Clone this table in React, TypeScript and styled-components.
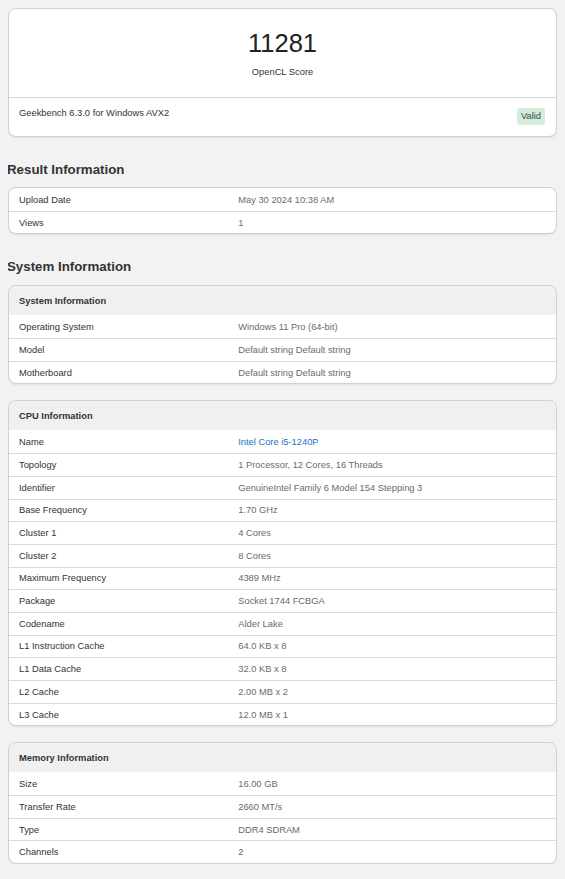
import React from "react";
import styled, { createGlobalStyle } from "styled-components";

const Global = createGlobalStyle`
  html, body { background: #f2f2f2; }
  body {
    margin: 8px;
    font-family: "Liberation Sans", Arial, sans-serif;
    color: #333;
  }
`;

const Card = styled.div`
  background: #fff;
  border: 1px solid #d0d0d0;
  border-radius: 8px;
  box-shadow: 0 1px 2px rgba(0, 0, 0, 0.08);
  overflow: hidden;
`;

const ScoreBody = styled.div`
  display: flex;
  flex-direction: column;
  align-items: center;
  padding: 19px 0 19px;
  border-bottom: 1px solid #d6d6d6;
`;

const Score = styled.div`
  font-size: 25.5px;
  line-height: 30px;
  color: #222;
`;

const ScoreLabel = styled.div`
  font-size: 9.33px;
  line-height: 12px;
  margin-top: 8px;
  color: #333;
`;

const ScoreFooter = styled.div`
  display: flex;
  justify-content: space-between;
  align-items: flex-start;
  padding: 9px 11px 11px 10px;
  font-size: 9.33px;
`;

const Version = styled.span`
  line-height: 12px;
  color: #333;
`;

const Badge = styled.span`
  background: #d4edda;
  color: #3b4a3e;
  border-radius: 3px;
  padding: 2px 4px;
  margin-top: 1px;
  line-height: 13px;
  font-size: 9.33px;
`;

const SectionTitle = styled.h2<{ $bottom: number }>`
  font-size: 13.3px;
  font-weight: bold;
  color: #333;
  margin: 25px 0 ${(p) => p.$bottom}px -1px;
  line-height: 16px;
`;

const Stack = styled.div`
  display: flex;
  flex-direction: column;
  gap: 16px;
`;

const HeaderRow = styled.div`
  background: #f0f0f0;
  height: 29px;
  display: flex;
  align-items: center;
  padding: 0 10px;
  font-size: 9.33px;
  font-weight: bold;
  color: #333;
`;

const Row = styled.div<{ $first?: boolean }>`
  display: grid;
  grid-template-columns: 41.6% 1fr;
  height: 22.7px;
  align-items: center;
  padding: 0 10px;
  font-size: 9.33px;
  border-top: 1px solid ${(p) => (p.$first ? "transparent" : "#dcdcdc")};
  box-sizing: border-box;
`;

const Label = styled.span`
  color: #333;
`;

const Value = styled.span`
  color: #6b6b6b;
`;

const LinkValue = styled.a`
  color: #1a73c1;
  text-decoration: none;
`;

type Item = [string, string, boolean?];

const InfoTable = ({ title, items }: { title?: string; items: Item[] }) => (
  <Card>
    {title && <HeaderRow>{title}</HeaderRow>}
    {items.map(([k, v, link], i) => (
      <Row key={k} $first={i === 0}>
        <Label>{k}</Label>
        {link ? <LinkValue href="#">{v}</LinkValue> : <Value>{v}</Value>}
      </Row>
    ))}
  </Card>
);

const result: Item[] = [
  ["Upload Date", "May 30 2024 10:38 AM"],
  ["Views", "1"],
];

const system: Item[] = [
  ["Operating System", "Windows 11 Pro (64-bit)"],
  ["Model", "Default string Default string"],
  ["Motherboard", "Default string Default string"],
];

const cpu: Item[] = [
  ["Name", "Intel Core i5-1240P", true],
  ["Topology", "1 Processor, 12 Cores, 16 Threads"],
  ["Identifier", "GenuineIntel Family 6 Model 154 Stepping 3"],
  ["Base Frequency", "1.70 GHz"],
  ["Cluster 1", "4 Cores"],
  ["Cluster 2", "8 Cores"],
  ["Maximum Frequency", "4389 MHz"],
  ["Package", "Socket 1744 FCBGA"],
  ["Codename", "Alder Lake"],
  ["L1 Instruction Cache", "64.0 KB x 8"],
  ["L1 Data Cache", "32.0 KB x 8"],
  ["L2 Cache", "2.00 MB x 2"],
  ["L3 Cache", "12.0 MB x 1"],
];

const memory: Item[] = [
  ["Size", "16.00 GB"],
  ["Transfer Rate", "2660 MT/s"],
  ["Type", "DDR4 SDRAM"],
  ["Channels", "2"],
];

export default function App() {
  return (
    <>
      <Global />
      <Card>
        <ScoreBody>
          <Score>11281</Score>
          <ScoreLabel>OpenCL Score</ScoreLabel>
        </ScoreBody>
        <ScoreFooter>
          <Version>Geekbench 6.3.0 for Windows AVX2</Version>
          <Badge>Valid</Badge>
        </ScoreFooter>
      </Card>
      <SectionTitle $bottom={9}>Result Information</SectionTitle>
      <InfoTable items={result} />
      <SectionTitle $bottom={10}>System Information</SectionTitle>
      <Stack>
        <InfoTable title="System Information" items={system} />
        <InfoTable title="CPU Information" items={cpu} />
        <InfoTable title="Memory Information" items={memory} />
      </Stack>
    </>
  );
}
